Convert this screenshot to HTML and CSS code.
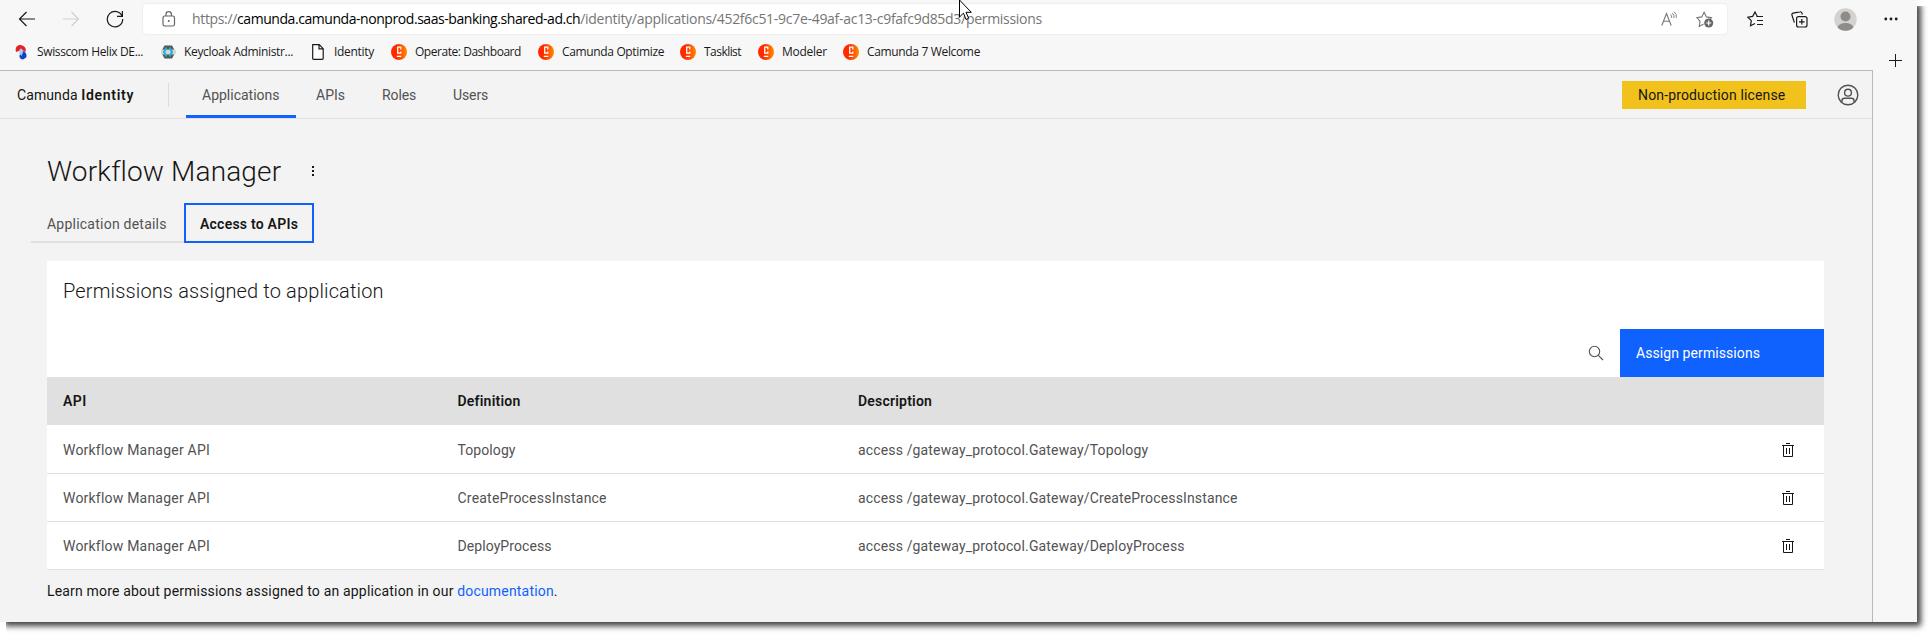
FILE: index.html
```
<!DOCTYPE html>
<html lang="en">
<head>
<meta charset="utf-8">
<title>Camunda Identity</title>
<link rel="stylesheet" href="styles.css">
</head>
<body>
<svg class="defs" width="0" height="0" aria-hidden="true">
  <defs>
    <linearGradient id="orange" x1="0" x2="1"><stop offset=".35" stop-color="#ff2a00"/><stop offset="1" stop-color="#ff8a00"/></linearGradient>
    <symbol id="camunda" viewBox="0 0 16 16"><circle cx="8" cy="8" r="8" fill="url(#orange)"/><path d="M9.800 5.600V3.200H6.700v6h3.100V7.400M5.800 12.400h4.400" fill="none" stroke="#fff" stroke-width="1.300"/></symbol>
    <symbol id="trash" viewBox="0 0 12 14"><path d="M4 .5h4M0 2.500h12M1.500 2.500v11h9v-11M4.500 5v6M7.500 5v6" fill="none" stroke="#161616"/></symbol>
  </defs>
</svg>
<div class="window">
  <div class="toolbar">
    <svg class="back" width="18" height="16" viewBox="0 0 18 16"><path d="M17 8H1.500M8.500 1L1.500 8l7 7" fill="none" stroke="#1a1a1a" stroke-width="1.200"/></svg>
    <svg class="forward" width="18" height="16" viewBox="0 0 18 16"><path d="M0 8h15.500M8.500 1l7 7-7 7" fill="none" stroke="#cfcfcf" stroke-width="1.200"/></svg>
    <svg class="reload" width="18" height="18" viewBox="0 0 18 18"><path d="M16.200 6.400A7.700 7.700 0 1 0 16.700 9M16.400 1v5.400h-5.400" fill="none" stroke="#1a1a1a" stroke-width="1.200"/></svg>
    <div class="address">
      <svg class="lock" width="14" height="16" viewBox="0 0 14 16"><rect x="1" y="5" width="11.500" height="10" rx="1.800" fill="none" stroke="#666" stroke-width="1.200"/><path d="M4 5V3.400a2.700 2.700 0 0 1 5.400 0V5" fill="none" stroke="#666" stroke-width="1.200"/><circle cx="6.800" cy="10" r="1" fill="#666"/></svg>
      <div class="url"><span class="scheme">https://</span><b>camunda.camunda-nonprod.saas-banking.shared-ad.ch</b><span class="path">/identity/applications/452f6c51-9c7e-49af-ac13-c9fafc9d85d3/permissions</span></div>
      <svg class="read" width="17" height="16" viewBox="0 0 17 16"><path d="M.800 14.500L5.500 2.500l4.700 12M2.500 10.300h6" fill="none" stroke="#777" stroke-width="1.100"/><path d="M9.500 3.500q1.500 1.200 1.200 3.500M11.200 2q2.200 1.800 1.900 5M13 .600q2.800 2.400 2.400 6.200" fill="none" stroke="#777" stroke-width=".9"/></svg>
      <svg class="addfav" width="18" height="17" viewBox="0 0 18 17"><path d="M7.500 13l-4.300 2.400.8-5.200L.800 6.600l5-.7L8.100 1.200l2.300 4.700 5 .7-1.500 1.500" fill="none" stroke="#777" stroke-width="1.100"/><circle cx="12.700" cy="12" r="4.500" fill="#666"/><path d="M12.700 9.500v5M10.200 12h5" stroke="#fff" stroke-width="1.200"/></svg>
    </div>
    <svg class="favs" width="17" height="16" viewBox="0 0 17 16"><path d="M8 12.500l-4.500 2.200.800-5-3.500-3.500 4.900-.8L8 1l2.200 4.300" fill="none" stroke="#1a1a1a" stroke-width="1.200"/><path d="M9.500 5.500H16M10 9.500h6M10 13.500h6" stroke="#1a1a1a" stroke-width="1.200"/></svg>
    <svg class="collections" width="17" height="17" viewBox="0 0 17 17"><rect x="5.600" y="5.600" width="10.400" height="10.400" rx="2" fill="none" stroke="#1a1a1a" stroke-width="1.200"/><path d="M10.800 8v5.600M8 10.800h5.600M3.400 11.600L1 4.200q-.500-1.600 1-2.100L9 .800q1.400-.300 1.900 1.200l.5 1.500" fill="none" stroke="#1a1a1a" stroke-width="1.200"/></svg>
    <svg class="avatar" width="23" height="23" viewBox="0 0 23 23"><defs><clipPath id="round"><circle cx="11.500" cy="11.500" r="11.200"/></clipPath></defs><circle cx="11.500" cy="11.500" r="11.200" fill="#d4d2cf"/><g clip-path="url(#round)" fill="#8f8b88"><circle cx="11.500" cy="8.500" r="5"/><ellipse cx="11.500" cy="20" rx="8" ry="5"/></g></svg>
    <svg class="dots" width="14" height="4" viewBox="0 0 14 4"><g fill="#1a1a1a"><circle cx="1.800" cy="2" r="1.400"/><circle cx="7" cy="2" r="1.400"/><circle cx="12.200" cy="2" r="1.400"/></g></svg>
  </div>
  <div class="body">
    <div class="left">
      <div class="bookmarks">
        <div class="mark s1"><svg width="16" height="16" viewBox="0 0 16 16"><path d="M3 8C1.500 3 5 .500 8.500 1.200 12 2 13.500 4.500 12.500 8L10 6.500 8 4.500 6 7z" fill="#e8202a"/><path d="M9 6.500c3 0 5.500 4 4.200 7L10 15.500c-3.500-.5-4.500-3.500-2.500-6z" fill="#1740c8"/><path d="M7.500 4.500l3 2.500-2 5-2.500-3z" fill="#9fcff0"/></svg>Swisscom Helix DE...</div>
        <div class="mark s2"><svg width="16" height="16" viewBox="0 0 16 16"><path d="M4.500 1.500h7.500l3.500 6.500-3.500 6.500H4.500L1 8z" fill="#555"/><path d="M1 5.500h14.500v5H1z" fill="#d5d5d5"/><path d="M6.500 3.500L4 8l2.500 4.500M9.500 3.500L12 8l-2.500 4.500" fill="none" stroke="#18b4dd" stroke-width="2"/></svg>Keycloak Administr...</div>
        <div class="mark s3"><svg width="16" height="16" viewBox="0 0 16 16"><path d="M2.700.700h6.500l4 4v9.800q0 .800-.8.800H3.500q-.8 0-.8-.8zM9 .700v4.100h4" fill="#fff" stroke="#1a1a1a" stroke-width="1.200"/></svg>Identity</div>
        <div class="mark s4"><svg width="16" height="16"><use href="#camunda"/></svg>Operate: Dashboard</div>
        <div class="mark s5"><svg width="16" height="16"><use href="#camunda"/></svg>Camunda Optimize</div>
        <div class="mark s6"><svg width="16" height="16"><use href="#camunda"/></svg>Tasklist</div>
        <div class="mark s7"><svg width="16" height="16"><use href="#camunda"/></svg>Modeler</div>
        <div class="mark s8"><svg width="16" height="16"><use href="#camunda"/></svg>Camunda 7 Welcome</div>
      </div>
      <div class="page">
        <header class="header">
          <div class="brand">Camunda <b>Identity</b></div>
          <nav class="nav">
            <a class="active">Applications</a><a>APIs</a><a>Roles</a><a>Users</a>
          </nav>
          <div class="license">Non-production license</div>
          <svg class="user" width="22" height="22" viewBox="0 0 22 22"><g fill="none" stroke="#525252" stroke-width="1.400"><circle cx="11" cy="11" r="9.800"/><circle cx="11" cy="8.700" r="3.400"/><path d="M5 18.300v-1.500q0-2.500 2.500-2.500h7q2.500 0 2.500 2.500v1.500"/></g></svg>
        </header>
        <main class="main">
          <div class="title"><h1>Workflow Manager</h1><svg width="4" height="12" viewBox="0 0 4 12"><path d="M1 1h2v2H1zM1 5h2v2H1zM1 9h2v2H1z" fill="#161616"/></svg></div>
          <div class="tabs"><div class="tab">Application details</div><div class="tab selected">Access to APIs</div></div>
          <section class="panel">
            <h2>Permissions assigned to application</h2>
            <div class="actions">
              <svg width="16" height="16" viewBox="0 0 16 16"><path d="M10.300 10.300L15 15" stroke="#525252" stroke-width="1.100"/><circle cx="6.500" cy="6.500" r="5.200" fill="none" stroke="#525252" stroke-width="1.100"/></svg>
              <button class="assign">Assign permissions</button>
            </div>
            <div class="row head"><span class="api">API</span><span>Definition</span><span>Description</span></div>
            <div class="row"><span>Workflow Manager API</span><span class="tight">Topology</span><span class="desc">access /gateway_protocol.Gateway/Topology</span><svg width="12" height="14"><use href="#trash"/></svg></div>
            <div class="row"><span>Workflow Manager API</span><span>CreateProcessInstance</span><span class="desc">access /gateway_protocol.Gateway/CreateProcessInstance</span><svg width="12" height="14"><use href="#trash"/></svg></div>
            <div class="row"><span>Workflow Manager API</span><span class="tight">DeployProcess</span><span class="desc">access /gateway_protocol.Gateway/DeployProcess</span><svg width="12" height="14"><use href="#trash"/></svg></div>
          </section>
          <p class="learn">Learn more about permissions assigned to an application in our <a>documentation</a>.</p>
        </main>
      </div>
    </div>
    <aside class="side"><svg width="13" height="13" viewBox="0 0 13 13"><path d="M6.500 0v13M0 6.500h13" stroke="#1a1a1a"/></svg></aside>
  </div>
  <svg class="cursor" width="13" height="22" viewBox="0 0 13 22"><path d="M.500 0v17l4-3.800 2.500 6.300 2.700-1.200-2.700-6h5.300z" fill="#fff" stroke="#000"/></svg>
</div>
</body>
</html>
```
FILE: styles.css
```
* { box-sizing: border-box; }
body { margin: 0; height: 637px; background: #fff; overflow: hidden; font-family: Roboto, sans-serif; color: #161616; }
svg { display: block; flex: none; }
h1, h2, p { margin: 0; }
.defs { position: absolute; }
.window {
  position: relative; width: 1917px; height: 622px; background: #f7f7f7;
  box-shadow: 4px 4px 6px 0 rgba(0, 0, 0, .75);
  clip-path: polygon(0 0, 1917px 0, 1917px 6px, 1932px 6px, 1932px 637px, 6px 637px, 6px 622px, 0 622px);
  display: flex; flex-direction: column;
}

/* browser toolbar */
.toolbar { height: 34px; padding-top: 4px; display: flex; align-items: center; font-family: "Open Sans", sans-serif; }
.back { margin-left: 18px; }
.forward { margin-left: 27px; }
.reload { margin-left: 25px; }
.address {
  width: 1584px; height: 30px; margin-left: 19px; background: #fff; border-radius: 4px;
  box-shadow: 0 0 2px rgba(0, 0, 0, .12); display: flex; align-items: center;
}
.lock { margin-left: 19px; }
.url { margin-left: 16px; font-size: 14px; line-height: 20px; white-space: nowrap; flex: 1; color: #767676; }
.url b { font-weight: 400; color: #000; letter-spacing: -.44px; }
.scheme { letter-spacing: -.34px; }
.path { letter-spacing: -.29px; }
.read { margin-right: 18px; }
.addfav { margin-right: 13px; }
.favs { margin-left: 20px; }
.collections { margin-left: 27px; }
.avatar { margin-left: 26px; }
.dots { margin-left: 27px; }

.body { flex: 1; display: flex; }
.left { width: 1873px; display: flex; flex-direction: column; }
.side { flex: 1; padding: 20px 0 0 16px; }
.bookmarks {
  height: 36px; padding-left: 13px; display: grid; align-items: center;
  grid-template-columns: 147px 150px 81px 147px 142px 78px 85px auto;
  font: 12px "Open Sans", sans-serif; color: #1a1a1a;
}
.mark { display: flex; align-items: center; gap: 8px; white-space: nowrap; line-height: 16px; }
.s1 { letter-spacing: -.37px; }
.s2 { letter-spacing: -.33px; }
.s3 { letter-spacing: -.3px; }
.s4 { letter-spacing: -.46px; }
.s5 { letter-spacing: -.35px; }
.s6 { letter-spacing: -.54px; }
.s7 { letter-spacing: -.25px; }
.s8 { letter-spacing: -.34px; }

/* application */
.page { flex: 1; background: #f3f3f3; border: solid #b9b9b9; border-width: 1px 1px 0 0; font-size: 14px; }
.header { height: 48px; display: flex; align-items: center; border-bottom: 1px solid #e0e0e0; }
.brand { width: 169px; height: 24px; line-height: 24px; padding-left: 17px; border-right: 1px solid #dcdcdc; letter-spacing: .1px; }
.brand b { font-weight: 600; letter-spacing: .7px; }
.nav { height: 47px; margin-left: 17px; display: flex; flex: 1; color: #525252; line-height: 48px; }
.nav a { padding: 0 16px; }
.nav a:nth-child(1) { width: 110px; margin-right: 4px; }
.nav a:nth-child(2) { width: 66px; }
.nav a:nth-child(3) { width: 71px; letter-spacing: -.1px; }
.nav a:nth-child(4) { letter-spacing: -.1px; }
.active { border-bottom: 3px solid #0f62fe; }
.license { width: 184px; height: 28px; line-height: 28px; padding-left: 16px; background: #f1c21b; letter-spacing: .15px; margin-right: 31px; }
.user { margin-right: 13px; }
.main { padding: 37px 48px 0 47px; }
.title { height: 30px; display: flex; align-items: center; }
.title h1 { font-size: 28px; font-weight: 300; line-height: 30px; letter-spacing: .15px; width: 264px; padding-top: 2px; }
.tabs { display: flex; margin: 17px 0 0 -16px; }
.tab { width: 153px; height: 40px; line-height: 43px; padding-left: 16px; color: #525252; border-bottom: 2px solid #e0e0e0; letter-spacing: .23px; }
.tab.selected { width: 130px; line-height: 39px; padding-left: 14px; border: 2px solid #0f62fe; color: #161616; font-weight: 600; }
.panel { margin-top: 18px; background: #fff; }
.panel h2 { height: 68px; padding: 15px 16px 0; font-size: 20px; font-weight: 300; line-height: 30px; letter-spacing: .14px; }
.actions { height: 48px; display: flex; justify-content: flex-end; align-items: center; gap: 16px; }
.assign { width: 204px; height: 48px; padding: 0 16px; border: 0; background: #0f62fe; color: #fff; text-align: left; font: 14px Roboto, sans-serif; letter-spacing: .08px; }
.row {
  height: 48px; padding-left: 16px; display: grid; align-items: center; color: #525252;
  grid-template-columns: 394.5px 400.5px 924px auto; border-bottom: 1px solid #e0e0e0; letter-spacing: .21px;
}
.row.head { background: #e0e0e0; color: #161616; font-weight: 600; }
.head + .row { height: 49px; padding-top: 2px; }
.api { letter-spacing: .5px; }
.tight { letter-spacing: .08px; }
.desc { letter-spacing: .15px; }
.learn { margin-top: 12px; line-height: 18px; letter-spacing: .18px; }
.learn a { color: #0f62fe; }
.cursor { position: absolute; left: 959px; top: 0; }
```
